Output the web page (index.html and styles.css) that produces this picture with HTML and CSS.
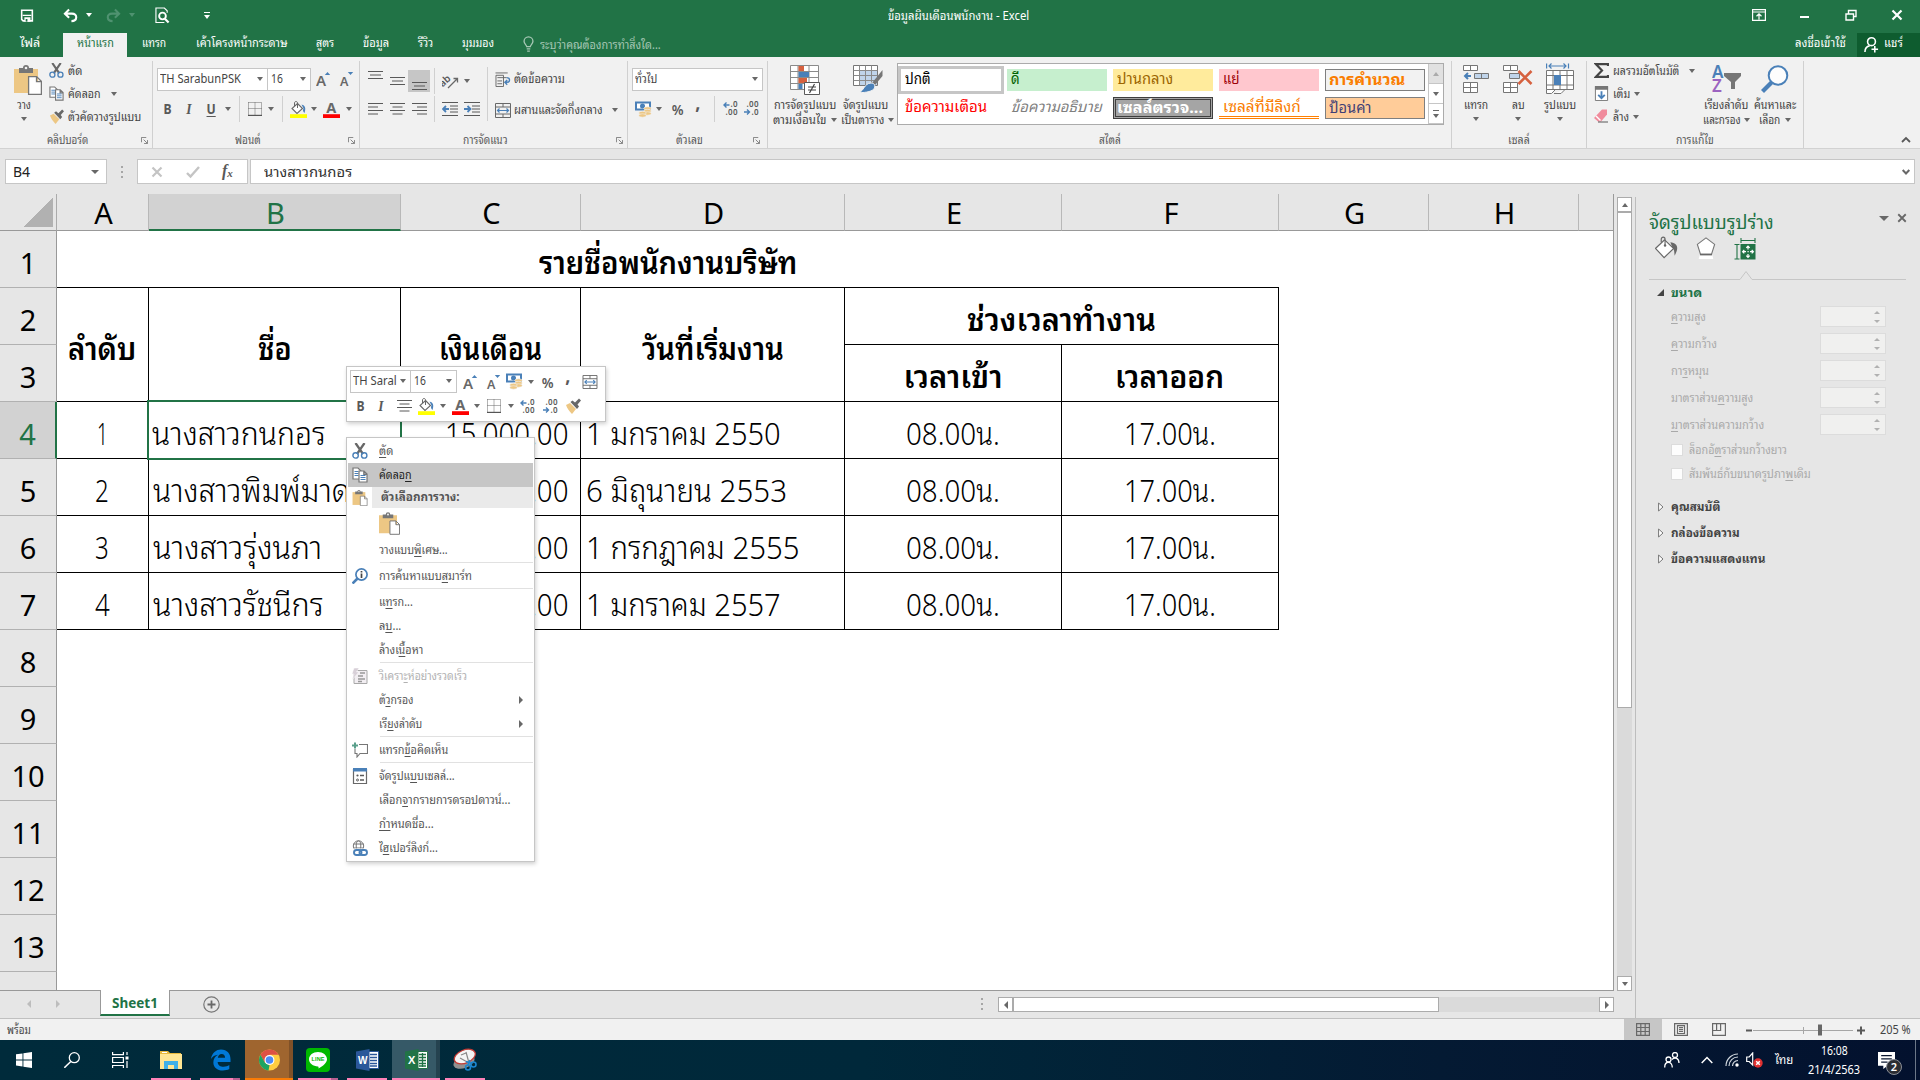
FILE: index.html
```html
<!DOCTYPE html>
<html lang="th">
<head>
<meta charset="utf-8">
<title>ข้อมูลเงินเดือนพนักงาน - Excel</title>
<link rel="stylesheet" href="styles.css">
</head>
<body>
<svg class="sprite" aria-hidden="true">
  <symbol id="save" viewBox="0 0 16 16"><path fill="none" stroke="#fff" stroke-width="1.8" d="M1.9 1.9h12.2v12.2H3.6L1.9 12.400z"/><path fill="#fff" d="M3 7h10v1.500H3zM5 10h7v5H5z"/><path fill="#217346" d="M6.500 12h2v3h-2z"/></symbol>
  <symbol id="undo" viewBox="0 0 16 16"><path fill="none" stroke="currentColor" stroke-width="2.200" d="M6.500 1.500 2 6l4.500 4.500M2.500 6h7c6.500 0 6 8-.5 8"/></symbol>
  <symbol id="preview" viewBox="0 0 16 18"><path fill="none" stroke="#fff" stroke-width="1.200" d="M13 6V4l-3-3H1v15.500h9"/><circle cx="8" cy="9.500" r="3.600" fill="none" stroke="#fff" stroke-width="2"/><path stroke="#fff" stroke-width="2.400" d="m10.500 12.500 4 4"/></symbol>
  <symbol id="bulb" viewBox="0 0 12 18"><path fill="none" stroke="#a6c7b4" stroke-width="1.500" d="M4 12c0-2-3-3-3-6a5 5 0 0 1 10 0c0 3-3 4-3 6zM4 14.500h4M4.500 17h3"/></symbol>
  <symbol id="person" viewBox="0 0 16 18"><circle cx="8" cy="6" r="4.200" fill="none" stroke="#fff" stroke-width="1.700"/><path fill="none" stroke="#fff" stroke-width="1.700" d="M1 17c0-4 2-6 5-6.500M8 14h7M11.500 10.500v7"/></symbol>
  <symbol id="ribbonopt" viewBox="0 0 14 12"><path fill="none" stroke="#fff" stroke-width="1.200" d="M.6.600h12.800v10.800H.6zM.6 3h12.800M7 10.500V5M4.500 7.200 7 4.800l2.500 2.400"/></symbol>
  <symbol id="restore" viewBox="0 0 12 12"><path fill="none" stroke="#fff" stroke-width="1.400" d="M1 5h7.500v6H1zM3.500 5V1.500H11v6H9"/></symbol>
  <symbol id="close" viewBox="0 0 12 12"><path fill="none" stroke="currentColor" stroke-width="2.200" d="m1.500 1.500 9 9m0-9-9 9"/></symbol>

  <symbol id="paste" viewBox="0 0 28 30"><path fill="#edc784" d="M0 4h24v24H0z"/><path fill="#767676" d="M5 3h4a3 3 0 0 1 6 0h4v5H5z"/><circle cx="12" cy="3" r="1.300" fill="#f1f1f1"/><path fill="#fff" stroke="#767676" stroke-width="1.300" d="M14.600 11.600h8l4.800 4.800v13H14.600zM22.500 11.600v5h5"/></symbol>
  <symbol id="cut" viewBox="0 0 16 16"><path stroke="#686868" stroke-width="2.300" d="m3.500 0 7.500 11M12.500 0 5 11"/><circle cx="3.600" cy="12.400" r="2.700" fill="none" stroke="#4a80b8" stroke-width="1.400"/><circle cx="12.200" cy="12.400" r="2.700" fill="none" stroke="#4a80b8" stroke-width="1.400"/></symbol>
  <symbol id="copy" viewBox="0 0 16 16"><path fill="#fff" stroke="#767676" stroke-width="1.200" d="M1 1h5l3 3v8H1z"/><path stroke="#4a80b8" d="M2.500 4.500h4M2.500 6.500h4M2.500 8.500h4"/><path fill="#fff" stroke="#767676" stroke-width="1.200" d="M7 4h5l3 3v8H7zM11.800 4v3.300H15"/><path stroke="#4a80b8" d="M8.500 8.500h5M8.500 10.500h5M8.500 12.500h5"/></symbol>
  <symbol id="brush" viewBox="0 0 16 16"><path fill="#edc784" d="m1 7 4-2 6 6-4 5C4 13 2 10 1 7z"/><path fill="#686868" d="m5.500 4 2-1.500 2.500 2L14 .5l2 2-3.500 4 1.500 2L12 11z"/></symbol>
  <symbol id="launch" viewBox="0 0 8 8"><path fill="none" stroke="#767676" d="M.5 6V.5H6M3 3l4 4M7.500 3.500v4h-4"/></symbol>
  <symbol id="grow" viewBox="0 0 15 16"><text x="0" y="15" font-family="Noto Sans" font-size="15" font-weight="600" fill="#686868" textLength="10">A</text><path fill="#4a80b8" d="m11.500 1 2.700 3H8.800z"/></symbol>
  <symbol id="shrink" viewBox="0 0 15 16"><text x="1" y="15" font-family="Noto Sans" font-size="12.500" font-weight="600" fill="#686868" textLength="8">A</text><path fill="#4a80b8" d="m11.500 4 2.700-3H8.800z"/></symbol>
  <symbol id="borders" viewBox="0 0 14 14"><path fill="none" stroke="#686868" stroke-dasharray="1 1" d="M.5.500h13v12.500M.5.500V13M7 .5V13M.5 6.500h13"/><path stroke="#555" stroke-width="1.200" d="M0 13.400h14"/></symbol>
  <symbol id="fill" viewBox="0 0 17 17"><path fill="#fff" stroke="#686868" stroke-width="1.100" d="m7.500 2.500 5 5-5.500 5-5-5z"/><path fill="none" stroke="#686868" d="M7.500 7V2c0-2-3-2-3 0v3"/><path fill="#4a80b8" d="M11.500 3.500c4 1 4.500 4 3 8.500-1.500-1.500-2-3-1-4.500z"/><path fill="#ff0" d="M0 13.200h17V17H0z"/></symbol>
  <symbol id="fontcolor" viewBox="0 0 17 17"><text x="3.300" y="12" font-family="Noto Sans" font-size="14.500" font-weight="700" fill="#686868" textLength="10.500">A</text><path fill="red" d="M0 13.200h17V17H0z"/></symbol>
  <symbol id="al-left" viewBox="0 0 15 12"><path stroke="#595959" d="M0 .5h15M0 4h10M0 7.500h15M0 11h10"/></symbol>
  <symbol id="al-center" viewBox="0 0 15 12"><path stroke="#595959" d="M0 .5h15M2.500 4h10M0 7.500h15M2.500 11h10"/></symbol>
  <symbol id="al-right" viewBox="0 0 15 12"><path stroke="#595959" d="M0 .5h15M5 4h10M0 7.500h15M5 11h10"/></symbol>
  <symbol id="v-lines" viewBox="0 0 15 8"><path stroke="#595959" d="M0 .5h15M2 4h11M0 7.500h15"/></symbol>
  <symbol id="orient" viewBox="0 0 17 15"><text x="-2" y="9" transform="rotate(-42 5 8)" font-family="Noto Sans" font-size="10" font-weight="600" fill="#595959">ab</text><path fill="none" stroke="#686868" stroke-width="1.300" d="m6 14 9-9M11.500 4.500h4v4"/></symbol>
  <symbol id="ind-out" viewBox="0 0 16 14"><path stroke="#595959" d="M0 .5h16M8 4h8M8 7h8M8 10h8M0 13.500h16"/><path fill="none" stroke="#4a80b8" stroke-width="1.800" d="M7 7H1.500M4 4 1 7l3 3"/></symbol>
  <symbol id="ind-in" viewBox="0 0 16 14"><path stroke="#595959" d="M0 .5h16M8 4h8M8 7h8M8 10h8M0 13.500h16"/><path fill="none" stroke="#4a80b8" stroke-width="1.800" d="M0 7h6M3.500 4l3 3-3 3"/></symbol>
  <symbol id="wrap" viewBox="0 0 16 16"><path fill="none" stroke="#686868" d="M.5 3.500h8v12h-8zM0 1h13M2 6h10M2 9.500h5M2 12.500h5"/><path fill="none" stroke="#4a80b8" stroke-width="1.500" d="M12 6c4 0 4 5 0 5h-2m2.500-2.500L10 11l2.500 2.500"/></symbol>
  <symbol id="merge" viewBox="0 0 16 15"><path fill="none" stroke="#686868" d="M.5.500h15v14H.5zM.5 4h15M.5 11h15M8 .5V4M8 11v3.500"/><path fill="none" stroke="#4a80b8" stroke-width="1.200" d="M2.500 7.500h11M4.500 5.500l-2 2 2 2M11.500 5.500l2 2-2 2"/></symbol>
  <symbol id="money" viewBox="0 0 17 16"><path fill="#4a80b8" d="M0 0h16v9H0z"/><path fill="#fff" d="M2 2h12v5H2z"/><circle cx="7.500" cy="4.500" r="2.500" fill="#4a80b8"/><g fill="#edc784" stroke="#f1f1f1" stroke-width=".6"><ellipse cx="12.500" cy="7" rx="3.700" ry="1.700"/><ellipse cx="12.500" cy="9.500" rx="3.700" ry="1.700"/><ellipse cx="12.500" cy="12" rx="3.700" ry="1.700"/><ellipse cx="7.500" cy="11.500" rx="3.700" ry="1.700"/><ellipse cx="7.500" cy="14" rx="3.700" ry="1.700"/></g></symbol>
  <symbol id="dec-inc" viewBox="0 0 15 14"><g font-family="Noto Sans" font-size="8" font-weight="600" fill="#595959"><text x="7.500" y="6.200" textLength="7">.0</text><text x="2.500" y="13.800" textLength="12">.00</text></g><path fill="none" stroke="#4a80b8" stroke-width="1.400" d="M6.500 4H1m2.500-2.500L1 4l2.500 2.500"/></symbol>
  <symbol id="dec-dec" viewBox="0 0 15 14"><g font-family="Noto Sans" font-size="8" font-weight="600" fill="#595959"><text x="2.500" y="6.200" textLength="12">.00</text><text x="7.500" y="13.800" textLength="7">.0</text></g><path fill="none" stroke="#4a80b8" stroke-width="1.400" d="M0 11h5.500M3 8.500 5.500 11 3 13.500"/></symbol>
  <symbol id="condfmt" viewBox="0 0 30 30"><path fill="#fff" stroke="#8a8a8a" d="M.5.500h28v24H.5zM8 .5v24M19 .5v24M.5 6.500h28M.5 12.500h28M.5 18.500h28"/><path fill="#d6613f" d="M8.500 1H14v5H8.500zM8.500 13H17v5H8.500z"/><path fill="#4a80b8" d="M8.500 7H19v5H8.500zM8.500 19h4v5h-4z"/><path fill="#fff" stroke="#595959" d="M14.500 17.500h15v12h-15z"/><path stroke="#444" stroke-width="1.200" d="M18 22h8M18 25h8M24.500 19l-5 9"/></symbol>
  <symbol id="fmttable" viewBox="0 0 30 28"><path fill="#fff" stroke="#767676" d="M.5.500h24v20H.5z"/><path fill="#c0d4ea" d="M6 5h18v15H6z"/><path stroke="#8a8a8a" d="M6.500.500v20M12.500.500v20M18.500.500v20M.5 5.500h24M.5 10.500h24M.5 15.500h24"/><path fill="#767676" d="M29.500 5v6L22 20l-3-2z"/><path fill="#4a80b8" stroke="#f1f1f1" d="M18 18c3 0 4.500 2 3.500 5S13 28 6 27.500C11 26 11 18.500 18 18z"/></symbol>
  <symbol id="insert" viewBox="0 0 26 28"><path fill="#fff" stroke="#767676" d="M.5.500h14v5H.5zM7.500.500v5M.5 17.500h14v10H.5zM7.500 17.500v10M.5 22.500h14"/><path fill="#c0d4ea" stroke="#767676" d="M11.500 8.500h14v5h-14zM18.500 8.500v5"/><path fill="none" stroke="#4a80b8" stroke-width="2" d="M8 11H2m3-3-3 3 3 3"/></symbol>
  <symbol id="delete" viewBox="0 0 30 28"><path fill="#fff" stroke="#767676" d="M.5.500h14v5H.5zM7.500.500v5M.5 17.500h14v10H.5zM7.500 17.500v10M.5 22.500h14"/><path fill="#c0d4ea" stroke="#767676" d="M6.500 8.500h10v5h-10z"/><path stroke="#d6613f" stroke-width="2.600" d="m15.500 6 13 13m0-13-13 13"/></symbol>
  <symbol id="format" viewBox="0 0 28 32"><path fill="#fff" stroke="#767676" d="M.5 7.500h27v19H.5zM7 7.500v19M14 7.500v19M21 7.500v19M.5 12.500h27M.5 22h27M.5 26.500v4h5l4-4M8 30.500h7l4-4"/><path fill="#4a80b8" d="M8 12h7v10H8z"/><path fill="none" stroke="#4a80b8" stroke-width="1.200" d="M.6.500v5M22.500.500v5M3 3h17M5.500.500 3 3l2.500 2.500M17.500.500 20 3l-2.500 2.500"/></symbol>
  <symbol id="sigma" viewBox="0 0 15 15"><path fill="none" stroke="#444" stroke-width="2.200" d="M14 3V1.200H2L8 7.500 2 13.800h12V12"/></symbol>
  <symbol id="filldown" viewBox="0 0 14 16"><path fill="#fff" stroke="#767676" d="M.5.500h13v15H.5z"/><path fill="#767676" d="M0 0h14v4H0z"/><path fill="none" stroke="#4a80b8" stroke-width="2" d="M7 5.500V13M3.500 9.500 7 13l3.500-3.500"/></symbol>
  <symbol id="eraser" viewBox="0 0 15 14"><path fill="#f08b9c" d="M8 0h5v5l-6 7H4L0 8.500z"/><path fill="#fff" d="m2.500 6 4.500 4.500-1 1L1.500 7z"/><path stroke="#595959" d="M4 12.500h10"/></symbol>
  <symbol id="sort" viewBox="0 0 30 28"><g font-family="Noto Sans" font-size="17" font-weight="600"><text x="0" y="12.500" fill="#4a80b8" textLength="11">A</text><text x="0" y="27" fill="#9b63c0" textLength="10">Z</text></g><path fill="#767676" d="M12 8h17v3l-6 6v7h-4v-7l-7-6z"/></symbol>
  <symbol id="find" viewBox="0 0 28 28"><circle cx="17" cy="10.500" r="9.300" fill="#fdfdfd" stroke="#4a80b8" stroke-width="2"/><path stroke="#4a80b8" stroke-width="4.200" d="m10.500 17.500-9 9"/></symbol>

  <symbol id="smart" viewBox="0 0 16 16"><circle cx="9.500" cy="6.500" r="5.600" fill="none" stroke="#4a80b8" stroke-width="1.700"/><path stroke="#4a80b8" stroke-width="2.600" d="m5.500 10.500-5 5"/><path stroke="#444" stroke-width="1.700" d="M9.500 5.500V10M9.500 3v1.500"/></symbol>
  <symbol id="quick" viewBox="0 0 16 16"><path fill="#f2eef2" stroke="#a8a8a8" d="M2 2.500h13v13H2z"/><path stroke="#999" stroke-width="1.700" d="M8 5h5M6 8h5M6 11h7M6 13.500h4"/><path fill="#d8d0d8" stroke="#fff" stroke-width=".5" d="M2 0h5L4.500 4H7L0 12l2-6H0z"/></symbol>
  <symbol id="comment" viewBox="0 0 16 16"><path fill="#fff" stroke="#767676" stroke-width="1.100" d="M7 2.500h8.500v9H8L5 15v-3.500H3V7"/><path stroke="#5a9f8b" stroke-width="2" d="M0 3.500h6M3 .5v6"/></symbol>
  <symbol id="fmtcells" viewBox="0 0 16 16"><path fill="#fff" stroke="#686868" stroke-width="1.200" d="M1.500 1.500h13v14h-13z"/><path fill="#4a80b8" d="M1 0h14v3.500H1z"/><path stroke="#595959" stroke-width="1.300" d="M8 7.500h4M8 12h4"/><circle cx="5.500" cy="7.500" r="1.100" fill="#595959"/><circle cx="5.500" cy="12" r="1" fill="none" stroke="#595959"/></symbol>
  <symbol id="link" viewBox="0 0 16 16"><g fill="none" stroke="#767676"><circle cx="6.500" cy="6" r="5.200"/><ellipse cx="6.500" cy="6" rx="2.300" ry="5.200"/><path d="M1.500 4h10M1.500 8h10"/></g><path fill="#fff" d="M1 8.500h15V16H1z"/><rect x="2" y="10" width="7.500" height="5" rx="2.500" fill="none" stroke="#4a80b8" stroke-width="1.900"/><rect x="7.500" y="10" width="7.500" height="5" rx="2.500" fill="none" stroke="#4a80b8" stroke-width="1.900"/></symbol>

  <symbol id="pane-fill" viewBox="0 0 24 23"><path fill="#686868" d="M16 6c8 1 9 6 4.500 14-.5-4 0-6-2.500-9z"/><path fill="#fff" stroke="#686868" stroke-width="1.200" d="m10 3.500 9.500 9-10 9.500-9-9.500z"/><path fill="none" stroke="#686868" stroke-width="1.200" d="M6.500 6V3c0-3 4-3 4 0v6"/><circle cx="10.500" cy="9.500" r="1.300" fill="#686868"/></symbol>
  <symbol id="pane-fx" viewBox="0 0 22 24"><path fill="#fff" stroke="#767676" stroke-width="1.200" d="M11 .8 20.500 8l-3.500 11H5L1.500 8z"/><path fill="#fff" d="M4 20h14l1 4H3z"/><path stroke="#686868" stroke-width="1.800" d="M4.500 19.200h13"/></symbol>
  <symbol id="pane-size" viewBox="0 0 21 22"><path fill="#217346" d="M6 6h15v15.500H6z"/><path fill="none" stroke="#217346" stroke-width="1.100" d="M6.500 0v5M20.500 0v5M6.500 2.500h14M0 6.500h5M0 21h5M2.500 6.500V21"/><path fill="none" stroke="#fff" stroke-width="1.200" d="M8.500 13.700h3M15.500 13.700h3M13.500 8.500v3M13.500 16v3M9.800 12l-1.700 1.700 1.700 1.700M17.200 12l1.700 1.700-1.700 1.700M11.800 9.800 13.500 8l1.700 1.800M11.800 17.700l1.700 1.800 1.700-1.800"/><path fill="#fff" d="M13 13h1.200v1.200H13z"/></symbol>

  <symbol id="win" viewBox="0 0 16 16"><path fill="#fff" d="M0 2.300 6.500 1.400v6H0zM7.400 1.300 16 0v7.400H7.400zM0 8.400h6.500v6L0 13.500zM7.400 8.400H16v7.500l-8.600-1.200z"/></symbol>
  <symbol id="search" viewBox="0 0 16 16"><circle cx="10.300" cy="5.700" r="5" fill="none" stroke="#fff" stroke-width="1.300"/><path stroke="#fff" stroke-width="1.500" d="m6.800 9.500-6.500 6.300"/></symbol>
  <symbol id="taskview" viewBox="0 0 17 16"><path fill="none" stroke="#fff" stroke-width="1.200" d="M.6 0v2.600h10.800V0M.6 5.500h10.800v5H.6zM.6 16v-2.500h10.800V16M15 0v3M15 9v7"/><path fill="#fff" d="M13.500 4.500h3v3h-3z"/></symbol>
  <symbol id="explorer" viewBox="0 0 22 18"><path fill="#e8b93d" d="M0 0h8l2 2h11v4H0z"/><path fill="#ffe694" d="M0 3h22v15H0z"/><path fill="#fff" d="M2 1h5v1H2z"/><path fill="#3fb0e8" d="M4 18v-8h14v8h-4v-4H8v4z"/></symbol>
  <symbol id="edge" viewBox="0 0 22 22"><path fill="#0078d7" d="M1 10C2 3.500 6.500 0 11.500 0 18 0 21.500 4.500 21.500 10v3H8c.3 3.500 3 5 6.200 5 2.400 0 4.500-.7 6-1.700v4.200C18.500 21.500 16 22 13.500 22 7.500 22 3.500 18.500 3.500 13.500c0-3.500 2-6.500 5-8C5 5.800 2.500 7.500 1 10zm7.200-1.300h7.600c0-2.500-1.300-4-3.600-4-2.200 0-3.600 1.700-4 4z"/></symbol>
  <symbol id="chrome" viewBox="0 0 22 22"><circle cx="11" cy="11" r="11" fill="#ffcd40"/><path fill="#dd5144" d="M11 0a11 11 0 0 1 9.500 5.500H11L6 14 1.500 5.500A11 11 0 0 1 11 0z"/><path fill="#1da462" d="M1.500 5.500 6.200 13.800 11 16.500l-1 5.500A11 11 0 0 1 1.500 5.500z"/><circle cx="11" cy="11" r="5.200" fill="#fff"/><circle cx="11" cy="11" r="4" fill="#4c8bf5"/></symbol>
  <symbol id="line" viewBox="0 0 24 24"><rect width="24" height="24" rx="4" fill="#00b900"/><path fill="#fff" d="M12 4c5 0 9 3.200 9 7.200 0 3.500-4 6.800-8.500 9.300.2-1.200.2-2-.5-2.100-5-.2-9-3.200-9-7.200S7 4 12 4z"/><text x="5.500" y="13.300" font-family="Liberation Sans" font-size="5.500" font-weight="700" fill="#00b900" textLength="13">LINE</text></symbol>
  <symbol id="word" viewBox="0 0 23 22"><path fill="#fff" stroke="#2b579a" d="M12 2.500h10.500v17H12z"/><path stroke="#2b579a" stroke-width="1.300" d="M14 5.500h7M14 8.500h7M14 11.500h7M14 14.500h7M14 17h7"/><path fill="#2b579a" d="m0 2.500 13.500-2.500v22L0 19.500z"/><text x="2" y="15" font-family="Liberation Sans" font-size="11" font-weight="700" fill="#fff" textLength="9.500" lengthAdjust="spacingAndGlyphs">W</text></symbol>
  <symbol id="excel" viewBox="0 0 23 22"><path fill="#fff" stroke="#217346" d="M12 2.500h10.500v17H12z"/><path stroke="#217346" stroke-width="1.300" d="M14 5.500h7M14 8.500h7M14 11.500h7M14 14.500h7M14 17h7M17.500 4v14"/><path fill="#217346" d="m0 2.500 13.500-2.500v22L0 19.500z"/><text x="3" y="15" font-family="Liberation Sans" font-size="11" font-weight="700" fill="#fff">X</text></symbol>
  <symbol id="snip" viewBox="0 0 24 22"><ellipse cx="11" cy="13" rx="11" ry="6" fill="#909090" transform="rotate(-20 11 13)"/><ellipse cx="12" cy="7.500" rx="11" ry="6.500" fill="#f4f4f4" stroke="#c33b35" stroke-width="1.300" transform="rotate(-22 12 8)"/><path stroke="#888" stroke-width="1.200" d="m7 9 9 5M13 3l3 11M8 6l5-2"/><circle cx="15" cy="18.500" r="2.500" fill="none" stroke="#1b86d0" stroke-width="1.600"/><circle cx="20.500" cy="15.500" r="2.500" fill="none" stroke="#1b86d0" stroke-width="1.600"/><path stroke="#1b86d0" stroke-width="1.500" d="M13 12.500l6 2M17 11l-2 5"/></symbol>
  <symbol id="people" viewBox="0 0 16 16"><g fill="none" stroke="#fff" stroke-width="1.300"><circle cx="11" cy="3" r="2.500"/><circle cx="4.500" cy="7.500" r="2.500"/><path d="M.7 15.500c0-7 7.600-7 7.600 0M8 7.500c3-3 7-1 7 3.500"/></g></symbol>
  <symbol id="wifi" viewBox="0 0 14 14"><g fill="none" stroke="#cfd6dd" stroke-width="1.200"><path d="M1 13A12 12 0 0 1 13 1M4 13A9 9 0 0 1 13 4M7.500 13A6 6 0 0 1 13 7.500"/></g><circle cx="12" cy="12" r="1.700" fill="#fff"/></symbol>
  <symbol id="mute" viewBox="0 0 17 16"><path fill="none" stroke="#fff" stroke-width="1.200" d="M.7 5h2.500l3.500-4v12L3.200 9.500H.7z"/><circle cx="12" cy="11" r="4.700" fill="#e03030"/><path stroke="#fff" stroke-width="1.500" d="m10.200 9.200 3.600 3.600m0-3.600-3.600 3.600"/></symbol>
  <symbol id="note" viewBox="0 0 16 16"><path fill="#fff" d="M0 0h16v13H9l-4 3v-3H0z"/><path stroke="#0a1730" stroke-width="1.200" d="M3 3.500h10M3 6.500h10M3 9.500h6"/></symbol>
</svg>

<div class="app">
  <header class="titlebar">
    <div class="qat">
      <svg class="q-save"><use href="#save"/></svg>
      <svg class="q-undo"><use href="#undo"/></svg><i class="dn white"></i>
      <svg class="q-redo"><use href="#undo"/></svg><i class="dn dim"></i>
      <svg class="q-prev"><use href="#preview"/></svg>
      <span class="q-more"><b></b><i class="dn white"></i></span>
    </div>
    <div class="doc-title"><span class="t" data-w="141">ข้อมูลผินเดือนพนักงาน - Excel</span></div>
    <div class="winctl"><svg class="w14"><use href="#ribbonopt"/></svg><b class="min"></b><svg class="w12"><use href="#restore"/></svg><svg class="w12"><use href="#close"/></svg></div>
  </header>

  <nav class="tabs">
    <span><span class="t" data-w="20">ไฟล์</span></span>
    <span class="active"><span class="t" data-w="37">หน้าแรก</span></span>
    <span><span class="t" data-w="24">แทรก</span></span>
    <span><span class="t" data-w="91">เค้าโครงหน้ากระดาษ</span></span>
    <span><span class="t" data-w="18">สูตร</span></span>
    <span><span class="t" data-w="26">ข้อมูล</span></span>
    <span><span class="t" data-w="15">รีวิว</span></span>
    <span><span class="t" data-w="32">มุมมอง</span></span>
    <span class="tell"><svg><use href="#bulb"/></svg><span class="t" data-w="121">ระบุว่าคุณต้องการทำสิ่งใด...</span></span>
    <span class="signin"><span class="t" data-w="51">ลงชื่อเข้าใช้</span></span>
    <span class="share"><svg><use href="#person"/></svg><span class="t" data-w="19">แชร์</span></span>
  </nav>

  <section class="ribbon">
    <div class="group g-clip">
      <div class="body">
        <div class="big paste"><svg><use href="#paste"/></svg><span class="t" data-w="14">วาง</span><i class="dn"></i></div>
        <div class="stack">
          <div><svg><use href="#cut"/></svg><span class="t" data-w="14">ตัด</span></div>
          <div><svg><use href="#copy"/></svg><span class="t" data-w="33">คัดลอก</span><i class="dn far"></i></div>
          <div><svg><use href="#brush"/></svg><span class="t" data-w="73">ตัวคัดวางรูปแบบ</span></div>
        </div>
      </div>
      <footer><span class="t" data-w="41">คลิปบอร์ด</span><svg><use href="#launch"/></svg></footer>
    </div>

    <div class="group g-font">
      <div class="row r1">
        <div class="combo"><span class="t" data-w="81">TH SarabunPSK</span><i class="dn"></i></div>
        <div class="combo"><span class="t" data-w="12">16</span><i class="dn"></i></div>
        <svg class="w15"><use href="#grow"/></svg><svg class="w15"><use href="#shrink"/></svg>
      </div>
      <div class="row r2">
        <b class="glyph">B</b><b class="glyph it">I</b><b class="glyph un">U</b><i class="dn"></i><s></s>
        <svg class="w14"><use href="#borders"/></svg><i class="dn"></i><s></s>
        <svg class="w17"><use href="#fill"/></svg><i class="dn"></i>
        <svg class="w17"><use href="#fontcolor"/></svg><i class="dn"></i>
      </div>
      <footer><span class="t" data-w="26">ฟอนต์</span><svg><use href="#launch"/></svg></footer>
    </div>

    <div class="group g-align">
      <div class="halves">
        <div class="left">
          <div class="row r1"><svg class="vl top"><use href="#v-lines"/></svg><svg class="vl"><use href="#v-lines"/></svg><span class="on"><svg class="vl"><use href="#v-lines"/></svg></span><s></s><svg class="w17"><use href="#orient"/></svg><i class="dn"></i></div>
          <div class="row r2"><svg class="al"><use href="#al-left"/></svg><svg class="al"><use href="#al-center"/></svg><svg class="al"><use href="#al-right"/></svg><s></s><svg class="ind"><use href="#ind-out"/></svg><svg class="ind"><use href="#ind-in"/></svg></div>
        </div>
        <s class="tall"></s>
        <div class="right">
          <div><svg><use href="#wrap"/></svg><span class="t" data-w="51">ตัดข้อความ</span></div>
          <div><svg><use href="#merge"/></svg><span class="t" data-w="89">ผสานและจัดกึ่งกลาง</span><i class="dn far"></i></div>
        </div>
      </div>
      <footer><span class="t" data-w="45">การจัดแนว</span><svg><use href="#launch"/></svg></footer>
    </div>

    <div class="group g-num">
      <div class="row r1"><div class="combo"><span class="t" data-w="22">ทั่วไป</span><i class="dn"></i></div></div>
      <div class="row r2"><svg class="w17"><use href="#money"/></svg><i class="dn"></i><b class="glyph pct">%</b><b class="glyph comma">,</b><s></s><svg class="w15"><use href="#dec-inc"/></svg><svg class="w15"><use href="#dec-dec"/></svg></div>
      <footer><span class="t" data-w="27">ตัวเลข</span><svg><use href="#launch"/></svg></footer>
    </div>

    <div class="group g-styles">
      <div class="body">
        <div class="big cond"><svg><use href="#condfmt"/></svg><span class="t" data-w="62">การจัดรูปแบบ</span><span class="ln"><span class="t" data-w="53">ตามเงื่อนไข</span><i class="dn"></i></span></div>
        <div class="big tbl"><svg><use href="#fmttable"/></svg><span class="t" data-w="45">จัดรูปแบบ</span><span class="ln"><span class="t" data-w="43">เป็นตาราง</span><i class="dn"></i></span></div>
        <div class="gallery">
          <div class="cells">
            <span class="c-normal"><span class="t" data-w="26">ปกติ</span></span>
            <span class="c-good"><span class="t" data-w="9">ดี</span></span>
            <span class="c-neutral"><span class="t" data-w="56">ปานกลาง</span></span>
            <span class="c-bad"><span class="t" data-w="17">แย่</span></span>
            <span class="c-calc"><span class="t" data-w="76">การคำนวณ</span></span>
            <span class="c-warn"><span class="t" data-w="82">ข้อความเตือน</span></span>
            <span class="c-expl"><span class="t" data-w="91">ข้อความอธิบาย</span></span>
            <span class="c-check"><span class="t" data-w="86">เซลล์ตรวจ...</span></span>
            <span class="c-linked"><span class="t" data-w="78">เซลล์ที่มีลิงก์</span></span>
            <span class="c-input"><span class="t" data-w="43">ป้อนค่า</span></span>
          </div>
          <div class="spin"><span class="off"><i class="up"></i></span><span><i class="dn"></i></span><span class="more"><b></b><i class="dn"></i></span></div>
        </div>
      </div>
      <footer><span class="t" data-w="22">สไตล์</span></footer>
    </div>

    <div class="group g-cells">
      <div class="body">
        <div class="big"><svg class="i-ins"><use href="#insert"/></svg><span class="t" data-w="24">แทรก</span><i class="dn"></i></div>
        <div class="big"><svg class="i-del"><use href="#delete"/></svg><span class="t" data-w="13">ลบ</span><i class="dn"></i></div>
        <div class="big"><svg class="i-fmt"><use href="#format"/></svg><span class="t" data-w="32">รูปแบบ</span><i class="dn"></i></div>
      </div>
      <footer><span class="t" data-w="22">เซลล์</span></footer>
    </div>

    <div class="group g-edit">
      <div class="body">
        <div class="stack">
          <div><svg><use href="#sigma"/></svg><span class="t" data-w="66">ผลรวมอัตโนมัติ</span><i class="dn far"></i></div>
          <div><svg><use href="#filldown"/></svg><span class="t" data-w="17">เติม</span><i class="dn"></i></div>
          <div><svg><use href="#eraser"/></svg><span class="t" data-w="16">ล้าง</span><i class="dn"></i></div>
        </div>
        <div class="big sortb"><svg><use href="#sort"/></svg><span class="t" data-w="44">เรียงลำดับ</span><span class="ln"><span class="t" data-w="38">และกรอง</span><i class="dn"></i></span></div>
        <div class="big findb"><svg><use href="#find"/></svg><span class="t" data-w="42">ค้นหาและ</span><span class="ln"><span class="t" data-w="21">เลือก</span><i class="dn"></i></span></div>
      </div>
      <footer><span class="t" data-w="38">การแก้ไข</span></footer>
    </div>
    <svg class="collapse" viewBox="0 0 10 6"><path fill="none" stroke="#595959" stroke-width="1.800" d="m1 5 4-4 4 4"/></svg>
  </section>

  <section class="formula">
    <div class="namebox"><span class="t" data-w="17">B4</span><i class="dn"></i></div>
    <div class="dots"><b></b><b></b><b></b></div>
    <div class="fxbox"><svg class="w12 x"><use href="#close"/></svg><svg class="w14 chk" viewBox="0 0 14 12"><path fill="none" stroke="#c4c4c4" stroke-width="2.400" d="m1 7 3.500 3.500L13 1"/></svg><em>f<sub>x</sub></em></div>
    <div class="input"><span class="t" data-w="88">นางสาวกนกอร</span><svg viewBox="0 0 8 6"><path fill="none" stroke="#686868" stroke-width="2" d="m.7 1 3.300 3.500L7.300 1"/></svg></div>
  </section>

  <main class="work">
    <div class="book">
      <div class="sheetrow">
        <div class="grid">
          <div class="corner"></div>
          <div class="ch">A</div><div class="ch sel">B</div><div class="ch">C</div><div class="ch">D</div><div class="ch">E</div><div class="ch">F</div><div class="ch">G</div><div class="ch">H</div><div class="ch last"></div>
          <div class="rh">1</div><div class="c title"><span class="t" data-w="258">รายชื่อพนักงานบริษัท</span></div>
          <div class="rh row2">2</div>
          <div class="c h two col-a"><span class="t" data-w="68">ลำดับ</span></div>
          <div class="c h two col-b"><span class="t" data-w="34">ชื่อ</span></div>
          <div class="c h two col-c"><span class="t" data-w="103">เงินเดือน</span></div>
          <div class="c h two col-d"><span class="t" data-w="142">วันที่เริ่มงาน</span></div>
          <div class="c h wide row2"><span class="t" data-w="189">ช่วงเวลาทำงาน</span></div>
          <div class="rh row3">3</div><div class="c h row3 col-e"><span class="t" data-w="99">เวลาเข้า</span></div><div class="c h row3 col-f"><span class="t" data-w="109">เวลาออก</span></div>
          <div class="rh sel">4</div><div class="c"><span class="t" data-w="11">1</span></div><div class="c l cur"><span class="t" data-w="174">นางสาวกนกอร</span></div><div class="c r"><span class="t" data-w="123">15,000.00</span></div><div class="c l d"><span class="t" data-w="195">1 มกราคม 2550</span></div><div class="c"><span class="t" data-w="94">08.00น.</span></div><div class="c"><span class="t" data-w="92">17.00น.</span></div>
          <div class="rh">5</div><div class="c"><span class="t" data-w="14">2</span></div><div class="c l"><span class="t" data-w="209">นางสาวพิมพ์มาดา</span></div><div class="c r"><span class="t" data-w="123">15,000.00</span></div><div class="c l d"><span class="t" data-w="201">6 มิถุนายน 2553</span></div><div class="c"><span class="t" data-w="94">08.00น.</span></div><div class="c"><span class="t" data-w="92">17.00น.</span></div>
          <div class="rh">6</div><div class="c"><span class="t" data-w="14">3</span></div><div class="c l"><span class="t" data-w="169">นางสาวรุ่งนภา</span></div><div class="c r"><span class="t" data-w="123">15,000.00</span></div><div class="c l d"><span class="t" data-w="214">1 กรกฎาคม 2555</span></div><div class="c"><span class="t" data-w="94">08.00น.</span></div><div class="c"><span class="t" data-w="92">17.00น.</span></div>
          <div class="rh">7</div><div class="c"><span class="t" data-w="15">4</span></div><div class="c l"><span class="t" data-w="171">นางสาวรัชนีกร</span></div><div class="c r"><span class="t" data-w="123">15,000.00</span></div><div class="c l d"><span class="t" data-w="195">1 มกราคม 2557</span></div><div class="c"><span class="t" data-w="94">08.00น.</span></div><div class="c"><span class="t" data-w="92">17.00น.</span></div>
          <div class="rh">8</div><div class="rh">9</div><div class="rh">10</div><div class="rh">11</div><div class="rh">12</div><div class="rh">13</div><div class="rh stub"></div>
        </div>
        <div class="vscroll"><span class="btn"><i class="up"></i></span><span class="thumb"></span><span class="track"></span><span class="btn"><i class="dn"></i></span></div>
      </div>
      <div class="tabbar">
        <i class="lt nav1"></i><i class="rt nav2"></i>
        <span class="sheet"><span class="t" data-w="46">Sheet1</span></span>
        <svg class="plus" viewBox="0 0 17 17"><circle cx="8.500" cy="8.500" r="7.700" fill="none" stroke="#767676" stroke-width="1.200"/><path stroke="#686868" stroke-width="1.800" d="M4.500 8.500h8M8.500 4.500v8"/></svg>
        <div class="dots"><b></b><b></b><b></b></div>
        <div class="hscroll"><span class="btn"><i class="lt"></i></span><span class="thumb"></span><span class="track"></span><span class="btn"><i class="rt"></i></span></div>
      </div>
    </div>

    <aside class="pane">
      <div class="phead"><span class="t" data-w="125">จัดรูปแบบรูปร่าง</span><i class="dn"></i><svg class="w12"><use href="#close"/></svg></div>
      <div class="picons"><svg><use href="#pane-fill"/></svg><svg><use href="#pane-fx"/></svg><svg><use href="#pane-size"/></svg></div>
      <svg class="rule" viewBox="0 0 257 10"><path fill="none" stroke="#c6c6c6" d="M0 9.500h91l6-8 6 8h154"/></svg>
      <h4 class="open"><svg viewBox="0 0 6 6"><path fill="#444" d="M6 0v6H0z"/></svg><span class="t" data-w="31">ขนาด</span></h4>
      <div class="field"><span class="t" data-w="35"><u>ค</u>วามสูง</span><span class="num"><i class="up"></i><i class="dn"></i></span></div>
      <div class="field"><span class="t" data-w="46"><u>ค</u>วามกว้าง</span><span class="num"><i class="up"></i><i class="dn"></i></span></div>
      <div class="field"><span class="t" data-w="38">กา<u>ร</u>หมุน</span><span class="num"><i class="up"></i><i class="dn"></i></span></div>
      <div class="field"><span class="t" data-w="82">มาตราส่วน<u>ค</u>วามสูง</span><span class="num"><i class="up"></i><i class="dn"></i></span></div>
      <div class="field"><span class="t" data-w="93"><u>ม</u>าตราส่วนความกว้าง</span><span class="num"><i class="up"></i><i class="dn"></i></span></div>
      <div class="check"><b></b><span class="t" data-w="98">ล็อกอั<u>ต</u>ราส่วนกว้างยาว</span></div>
      <div class="check"><b></b><span class="t" data-w="122">สัมพันธ์กับขนาดรูปภา<u>พ</u>เดิม</span></div>
      <div class="sections">
        <h4><svg viewBox="0 0 6 10"><path fill="#fff" stroke="#767676" d="m.6 1 4.400 4L.6 9z"/></svg><span class="t" data-w="49">คุณสมบัติ</span></h4>
        <h4><svg viewBox="0 0 6 10"><path fill="#fff" stroke="#767676" d="m.6 1 4.400 4L.6 9z"/></svg><span class="t" data-w="69">กล่องข้อความ</span></h4>
        <h4><svg viewBox="0 0 6 10"><path fill="#fff" stroke="#767676" d="m.6 1 4.400 4L.6 9z"/></svg><span class="t" data-w="94">ข้อความแสดงแทน</span></h4>
      </div>
    </aside>
  </main>

  <div class="status">
    <span class="t" data-w="24">พร้อม</span>
    <span class="view on"><svg viewBox="0 0 14 13"><path fill="none" stroke="#686868" stroke-width="1.200" d="M.6.600h12.800v11.800H.6zM4.800.600v11.800M9.200.600v11.800M.6 4.500h12.800M.6 8.500h12.800"/></svg></span>
    <span class="view"><svg viewBox="0 0 14 13"><path fill="none" stroke="#686868" stroke-width="1.200" d="M.6.600h12.800v11.800H.6zM3.500 2.700h7v7.800h-7zM5 4.700h4M5 6.600h4M5 8.500h4"/></svg></span>
    <span class="view"><svg viewBox="0 0 14 13"><path fill="none" stroke="#686868" stroke-width="1.200" d="M.6.600h12.800v11.800H.6zM.6 7.500h8V.6M4.600.600v7"/></svg></span>
    <svg class="zoombar" viewBox="0 0 120 12"><path stroke="#595959" stroke-width="2" d="M0 6.500h6M111 6.500h8M115 2.500v8"/><path stroke="#a6a6a6" d="M7 6.500h100M57.500 3v7"/><path fill="#686868" d="M72 .5h4v11h-4z"/></svg>
    <span class="t pc" data-w="31">205 %</span>
  </div>

  <div class="taskbar">
    <span class="tb"><svg class="s16"><use href="#win"/></svg></span>
    <span class="tb"><svg class="s16"><use href="#search"/></svg></span>
    <span class="tb wideb"><svg class="s17"><use href="#taskview"/></svg></span>
    <span class="tb app-i run"><svg class="sx"><use href="#explorer"/></svg></span>
    <span class="tb app-i run many"><svg class="s22"><use href="#edge"/></svg></span>
    <span class="tb app-i hot"><svg class="s22"><use href="#chrome"/></svg></span>
    <span class="tb app-i run many"><svg class="s24"><use href="#line"/></svg></span>
    <span class="tb app-i run"><svg class="s23"><use href="#word"/></svg></span>
    <span class="tb app-i front"><svg class="s23"><use href="#excel"/></svg></span>
    <span class="tb app-i run"><svg class="s24"><use href="#snip"/></svg></span>
    <div class="tray">
      <svg class="s16 people"><use href="#people"/></svg>
      <svg class="caret" viewBox="0 0 12 8"><path fill="none" stroke="#fff" stroke-width="1.500" d="m.7 7 5.300-5.500L11.300 7"/></svg>
      <svg class="wifi"><use href="#wifi"/></svg>
      <svg class="mute"><use href="#mute"/></svg>
      <span class="t lang" data-w="18">ไทย</span>
      <div class="clock"><span class="t" data-w="27">16:08</span><span class="t" data-w="52">21/4/2563</span></div>
      <div class="notes"><svg><use href="#note"/></svg><b>2</b></div>
      <s></s>
    </div>
  </div>
</div>

<div class="mini">
  <div class="mrow m1">
    <div class="combo"><span class="t" data-w="44">TH Saral</span><i class="dn"></i></div>
    <div class="combo"><span class="t" data-w="12">16</span><i class="dn"></i></div>
    <svg class="w15"><use href="#grow"/></svg><svg class="w15"><use href="#shrink"/></svg><svg class="w17"><use href="#money"/></svg><i class="dn"></i><b class="glyph pct">%</b><b class="glyph comma">,</b><svg class="ind"><use href="#merge"/></svg>
  </div>
  <div class="mrow m2">
    <b class="glyph">B</b><b class="glyph it">I</b><svg class="al"><use href="#al-center"/></svg><svg class="w17"><use href="#fill"/></svg><i class="dn"></i><svg class="w17"><use href="#fontcolor"/></svg><i class="dn"></i><svg class="w14"><use href="#borders"/></svg><i class="dn"></i><svg class="w15"><use href="#dec-inc"/></svg><svg class="w15"><use href="#dec-dec"/></svg><svg class="s16"><use href="#brush"/></svg>
  </div>
</div>

<div class="menu">
  <div class="mi"><svg><use href="#cut"/></svg><span class="t" data-w="14"><u>ตั</u>ด</span></div>
  <div class="mi hover"><svg><use href="#copy"/></svg><span class="t" data-w="33">คัดลอ<u>ก</u></span></div>
  <div class="mi head"><svg><use href="#paste"/></svg><span class="band"><span class="t" data-w="79">ตัวเลือกการวาง:</span></span></div>
  <div class="mi opt"><span></span><svg><use href="#paste"/></svg></div>
  <div class="mi"><span></span><span class="t" data-w="69">วางแบบ<u>พิ</u>เศษ...</span></div>
  <hr>
  <div class="mi"><svg><use href="#smart"/></svg><span class="t" data-w="93">การค้นหาแบบ<u>ส</u>มาร์ท</span></div>
  <hr>
  <div class="mi"><span></span><span class="t" data-w="34">แ<u>ท</u>รก...</span></div>
  <div class="mi"><span></span><span class="t" data-w="22">ล<u>บ</u>...</span></div>
  <div class="mi"><span></span><span class="t" data-w="44">ล้างเ<u>นื้</u>อหา</span></div>
  <hr>
  <div class="mi off"><svg><use href="#quick"/></svg><span class="t" data-w="88">วิเครา<u>ะ</u>ห์อย่างรวดเร็ว</span></div>
  <div class="mi"><span></span><span class="t" data-w="34">ตั<u>ว</u>กรอง</span><i class="rt"></i></div>
  <div class="mi"><span></span><span class="t" data-w="43">เรี<u>ย</u>งลำดับ</span><i class="rt"></i></div>
  <hr>
  <div class="mi"><svg><use href="#comment"/></svg><span class="t" data-w="69">แทรก<u>ข้</u>อคิดเห็น</span></div>
  <hr>
  <div class="mi"><svg><use href="#fmtcells"/></svg><span class="t" data-w="76">จัดรูปแ<u>บ</u>บเซลล์...</span></div>
  <div class="mi"><span></span><span class="t" data-w="131">เลือก<u>จ</u>ากรายการดรอปดาวน์...</span></div>
  <div class="mi"><span></span><span class="t" data-w="55"><u>กำ</u>หนดชื่อ...</span></div>
  <div class="mi"><svg><use href="#link"/></svg><span class="t" data-w="59">ไ<u>ฮ</u>เปอร์ลิงก์...</span></div>
</div>
<script src="fit.js"></script>
</body>
</html>
```
FILE: styles.css
```css
* { box-sizing: border-box; }
body { margin: 0; width: 1920px; height: 1080px; overflow: hidden; font: 12px/16px "Noto Sans", "Noto Sans Thai Looped", "Noto Looped Thai", Loma, Waree, Garuda, "Noto Sans Thai", "Open Sans", sans-serif; color: #444; background: #e6e6e6; }
.sprite { display: none; }
svg { display: block; flex: none; overflow: visible; }
.t { display: inline-block; white-space: nowrap; transform-origin: 0 50%; flex: none; }
s { display: block; width: 1px; height: 26px; background: #d0d0d0; }
i { display: block; flex: none; width: 0; height: 0; }
.dn { border: 3px solid transparent; border-top: 4px solid #686868; border-bottom: 0; }
.up { border: 3px solid transparent; border-bottom: 4px solid #686868; border-top: 0; }
.lt { border: 4px solid transparent; border-right: 4px solid #686868; border-left: 0; }
.rt { border: 4px solid transparent; border-left: 4px solid #686868; border-right: 0; }
.w12 { width: 12px; height: 12px; } .w14 { width: 14px; height: 14px; } .w15 { width: 15px; height: 16px; } .w17 { width: 17px; height: 17px; }
.s16 { width: 16px; height: 16px; } .s17 { width: 17px; height: 16px; } .s22 { width: 21px; height: 22px; } .s23 { width: 23px; height: 22px; } .s24 { width: 24px; height: 24px; } .sx { width: 22px; height: 18px; }
.app { display: flex; flex-direction: column; height: 1080px; }

/* title bar */
.titlebar { display: flex; height: 33px; background: #217346; color: #fff; }
.qat { display: flex; align-items: center; width: 888px; padding: 0 0 3px 20px; }
.q-save { width: 14px; height: 15px; margin-right: 29px; }
.q-undo, .q-redo { width: 15px; height: 15px; margin-right: 8px; }
.q-redo { color: #4f9270; transform: scaleX(-1); margin-left: 14px; }
.white { border-top-color: #fff; } .dim { border-top-color: #4f9270; }
.q-prev { width: 15px; height: 17px; margin-left: 20px; }
.q-more { margin-left: 34px; }
.q-more b { display: block; width: 6px; height: 1px; background: #fff; margin-bottom: 2px; }
.doc-title { width: 864px; line-height: 32px; }
.winctl { display: flex; align-items: center; padding-bottom: 3px; }
.winctl .w14 { height: 12px; }
.winctl .min { width: 9px; height: 2px; background: #fff; margin: 4px 36px 0 34px; }
.winctl .w12 + .w12 { margin-left: 34px; }

.tabs { display: grid; grid-template-columns: 61px 66px 54px 121px 46px 56px 43px 62px 1275px 73px 63px; height: 24px; background: #217346; color: #fff; justify-items: center; line-height: 20px; }
.tabs .active { background: #f1f1f1; color: #217346; width: 64px; text-align: center; justify-self: end; }
.tabs > span { height: 24px; display: flex; justify-content: center; }
.tabs .tell { justify-self: start; padding-left: 14px; color: #a6c7b4; gap: 6px; line-height: 23px; }
.tell svg { width: 11px; height: 16px; margin-top: 3px; }
.tabs .share { width: 63px; justify-content: flex-start; gap: 5px; padding-left: 7px; background: #0e5c2f; }
.share svg { width: 15px; height: 17px; margin-top: 3px; }

/* ribbon */
.ribbon { display: flex; height: 92px; background: #f1f1f1; border-bottom: 1px solid #d2d2d2; }
.group { display: flex; flex-direction: column; position: relative; height: 87px; margin-top: 4px; border-right: 1px solid #d0d0d0; }
.group footer { display: flex; justify-content: center; margin-top: auto; height: 15px; color: #595959; position: relative; line-height: 14px; }
.group footer svg { position: absolute; right: 4px; top: 4px; width: 7px; height: 7px; }
.g-clip { width: 153px; } .g-font { width: 207px; } .g-align { width: 268px; } .g-num { width: 140px; } .g-styles { width: 684px; } .g-cells { width: 135px; } .g-edit { width: 217px; }
.g-clip footer { padding-right: 17px; } .g-font footer { padding-right: 16px; } .g-num footer { padding-right: 16px; } .g-align footer { padding-right: 17px; }
.g-num footer svg { right: 7px; }
.body { display: flex; }
.big { display: flex; flex-direction: column; align-items: center; padding-top: 4px; }
.big > svg { height: 28px; margin-bottom: 4px; }
.big > .t { line-height: 16px; height: 16px; }
.big > .dn { margin-top: 4px; }
.ln { display: flex; align-items: center; gap: 4px; line-height: 14px; }
.paste { width: 43px; padding-left: 7px; }
.paste > svg { width: 28px; height: 30px; margin: 0 0 2px 6px; }
.paste > .t { align-self: flex-start; margin-left: 10px; }
.paste > .dn { align-self: flex-start; margin-left: 14px; }
.stack { display: grid; grid-template-rows: repeat(3, 23px); padding-left: 6px; margin-top: -2px; }
.stack > div { display: flex; align-items: center; gap: 4px; }
.stack svg { width: 15px; height: 15px; }
.far { margin-left: 6px; }
.row { display: grid; place-items: center; height: 22px; margin-top: 7px; }
.row > .w15 { margin-top: -2px; }
.row.r2 { height: 26px; margin-top: 6px; }
.g-font .r1 { grid-template-columns: 111px 43px 25px 20px; margin-left: 4px; }
.g-font .r2 { grid-template-columns: 22px 22px 22px 12px 10px 21px 12px 10px 22px 10px 25px 10px; margin-left: 3px; }
.combo { display: flex; align-items: center; justify-content: space-between; width: 100%; height: 23px; border: 1px solid #c6c6c6; background: #fff; padding: 0 4px 2px 2px; }
.combo + .combo { width: calc(100% + 1px); margin-left: -1px; padding-left: 3px; }
.glyph { font: 700 13.500px/18px "Noto Sans", sans-serif; color: #595959; transform: scaleX(.9); }
.it { font-family: "Liberation Serif", serif; font-style: italic; font-size: 15px; }
.un { text-decoration: underline; text-underline-offset: 2px; }
.pct { font-size: 15px; font-weight: 600; }
.comma { font-size: 20px; line-height: 12px; margin-top: -14px; }
.halves { display: flex; height: 62px; padding-left: 4px; }
.halves .left { width: 119px; }
.g-align .r1 { grid-template-columns: 22px 22px 22px 8px 24px 10px; justify-content: start; }
.g-align .r2 { grid-template-columns: 22px 22px 22px 8px 24px 20px; justify-content: start; }
.vl { width: 15px; height: 8px; } .al { width: 15px; height: 12px; } .ind { width: 16px; height: 14px; }
.vl.top { align-self: start; margin-top: 3px; }
.on .vl { margin: 12px auto 0; }
.row .on { width: 22px; height: 22px; background: #c6c6c6; }
.tall { margin: 6px 3px 0 4px; height: 54px; }
.halves .right > div { display: flex; align-items: center; gap: 3px; height: 22px; margin: 7px 0 9px 4px; }
.halves .right svg { width: 16px; height: 15px; }
.g-num .r1 { grid-template-columns: 131px; margin-left: 4px; }
.g-num .r2 { grid-template-columns: 22px 10px 27px 14px 18px 14px 29px; margin-left: 4px; }
.cond { width: 70px; margin-left: 2px; } .cond > svg { width: 30px; height: 30px; margin-bottom: 2px; }
.tbl { width: 55px; } .tbl > svg { width: 30px; height: 28px; }
.tbl > .t { margin-right: 4px; }
.gallery { display: flex; width: 547px; height: 62px; border: 1px solid #ababab; background: #fff; margin: 2px 0 0 2px; }
.cells { display: grid; grid-template: 22px 22px / repeat(5, 100px); gap: 6px; padding: 5px 3px; width: 531px; font-size: 15px; line-height: 18px; }
.cells > span { padding-left: 4px; white-space: nowrap; height: 22px; }
.c-normal { color: #000; outline: 3px solid #c6c6c6; }
.c-good { background: #c6efce; color: #006100; }
.c-neutral { background: #ffeb9c; color: #9c6500; }
.c-bad { background: #ffc7ce; color: #9c0006; }
.c-calc { background: #f2f2f2; color: #fa7d00; border: 1px solid #7f7f7f; font-weight: 700; }
.cells .c-calc, .cells .c-input { padding-left: 3px; }
.c-warn { color: red; } .c-expl { color: #7f7f7f; font-style: italic; }
.cells .c-check { background: #a5a5a5; color: #fff; font-weight: 700; border: 3px double #3f3f3f; padding-left: 1px; line-height: 14px; }
.c-linked { color: #fa7d00; border-bottom: 3px double #ff8001; }
.c-input { background: #fc9; color: #3f3f76; border: 1px solid #7f7f7f; }
.spin { width: 15px; display: grid; grid-template-rows: 20px 20px 20px; border-left: 1px solid #c6c6c6; }
.spin span { display: grid; place-content: center; justify-items: center; border-bottom: 1px solid #c6c6c6; }
.spin .off { background: #e1e1e1; } .off .up { border-bottom-color: #ababab; }
.spin .more b { width: 6px; height: 1px; background: #686868; margin-bottom: 3px; }
.g-styles footer { padding-left: 0; }
.g-cells .body { padding-left: 3px; } .g-cells .big { width: 42px; }
.i-ins { width: 26px; } .i-del { width: 30px; } .big > .i-fmt { width: 28px; height: 32px; margin: -2px 0 2px; }
.g-edit .stack { padding-left: 7px; width: 115px; }
.sortb { width: 49px; } .sortb > svg { width: 30px; } .findb { width: 48px; } .findb > svg { width: 28px; }
.g-edit footer { padding-right: 0; }
.collapse { width: 10px; height: 6px; margin: 80px 0 0 97px; }

/* formula bar */
.formula { display: flex; height: 45px; padding: 10px 5px 0; }
.formula > div { height: 25px; background: #fff; border: 1px solid #c6c6c6; display: flex; align-items: center; }
.namebox { width: 102px; justify-content: space-between; padding: 0 7px; font-size: 14px; color: #222; }
.namebox .dn { border-width: 4px 4px 0; }
.formula > .dots, .dots { width: 30px; background: none; border: 0; flex-direction: column; justify-content: center; gap: 3px; display: flex; align-items: center; }
.dots b { width: 2px; height: 2px; background: #a6a6a6; }
.fxbox { width: 111px; padding-left: 13px; }
.fxbox .x { color: #c4c4c4; margin-right: 23px; }
.fxbox em { font: italic 700 16px/16px "Liberation Serif", serif; margin-left: 22px; color: #595959; }
.fxbox sub { font-size: 11px; vertical-align: -1px; }
.input { width: 1665px; margin-left: 2px; padding: 0 4px 0 13px; justify-content: space-between; font-size: 14px; color: #333; }
.input svg { width: 8px; height: 6px; }

/* sheet */
.work { display: flex; height: 824px; }
.book { width: 1635px; }
.sheetrow { display: flex; height: 797px; }
.grid { display: grid; width: 1614px; height: 797px; grid-template-columns: 57px 92px 252px 180px 264px 217px 217px 150px 150px 35px; grid-template-rows: 37px repeat(13, 57px) 18px; background: #fff; border-bottom: 1px solid #999; border-right: 1px solid #999; overflow: hidden; font-size: 31px; line-height: 40px; }
.corner, .ch, .rh { background: #e6e6e6; color: #000; font: 29px/35px "Noto Sans", sans-serif; text-align: center; }
.corner { border-right: 1px solid #ababab; border-bottom: 1px solid #999; background: linear-gradient(to bottom right, transparent 50%, #b1b1b1 50%) 24px 4px / 29px 29px no-repeat #e6e6e6; }
.ch { border-bottom: 1px solid #999; border-right: 1px solid #b8b8b8; padding: 1px 0 0 2px; }
.ch.last { border-right: 0; margin-right: 0; }
.ch.sel { background: #d2d2d2; color: #217346; border-bottom: 2px solid #217346; }
.rh { grid-column: 1; border-right: 1px solid #999; border-bottom: 1px solid #b1b1b1; padding-top: 11px; line-height: 42px; }
.rh.sel { background: #d2d2d2; color: #217346; border-right: 2px solid #217346; }
.rh.stub { padding: 0; border-bottom: 0; }
.c { display: flex; justify-content: center; align-items: center; padding: 6px 1px 0 0; border: solid #000; border-width: 0 1px 1px 0; color: #000; white-space: nowrap; font-weight: 300; min-width: 0; }
.c.l { justify-content: flex-start; padding-left: 4px; } .c.l.d { padding-left: 5px; }
.c.r { justify-content: flex-end; padding-right: 12px; }
.c.h, .c.title { font-weight: 600; padding: 6px 0 0; }
.title { grid-column: 2 / 8; border-right: 0; }
.two { grid-row: 3 / 5; } .wide { grid-column: 6 / 8; }
.row2 { grid-row: 3; } .row3 { grid-row: 4; }
.col-a { grid-column: 2; } .col-b { grid-column: 3; } .col-c { grid-column: 4; } .col-d { grid-column: 5; } .col-e { grid-column: 6; } .col-f { grid-column: 7; }
.cur { outline: 2px solid #217346; outline-offset: -1px; margin: -1px 0 0 -1px; z-index: 1; }
.vscroll { display: flex; flex-direction: column; width: 15px; margin: 3px 0 0 3px; height: 794px; }
.btn { width: 15px; height: 15px; background: #fff; border: 1px solid #ababab; display: grid; place-items: center; flex: none; }
.vscroll .thumb { height: 496px; background: #fff; border: 1px solid #ababab; }
.vscroll .track { flex: 1; background: #dadada; }
.tabbar { display: flex; align-items: center; height: 25px; }
.nav1 { margin-left: 27px; border-right-color: #bdbdbd; } .nav2 { margin-left: 25px; border-left-color: #bdbdbd; }
.sheet { width: 70px; height: 26px; margin: -2px 0 0 40px; background: #fff; border: solid #999; border-width: 0 1px; border-bottom: 2px solid #217346; text-align: center; color: #217346; font: 700 13.500px/26px "Noto Sans", sans-serif; }
.plus { width: 17px; height: 17px; margin: 2px 0 0 33px; }
.tabbar .dots { width: 6px; margin-left: 759px; }
.hscroll { display: flex; height: 15px; width: 616px; margin: 2px 0 0 13px; }
.hscroll .thumb { width: 426px; background: #fff; border: 1px solid #ababab; }
.hscroll .track { flex: 1; background: #dadada; }

/* format pane */
.pane { width: 285px; height: 821px; margin-top: 3px; border-left: 1px solid #bdbdbd; padding-left: 13px; color: #a9a9a9; }
.phead { display: flex; color: #217346; font-size: 19px; line-height: 28px; height: 39px; padding-top: 11px; }
.phead .dn { border-width: 5px 5px 0; margin: 8px 8px 0 105px; }
.phead svg { width: 10px; height: 10px; margin-top: 5px; color: #686868; }
.picons { display: flex; padding: 0 0 0 6px; height: 34px; }
.picons svg { width: 23px; height: 23px; } .picons svg + svg { width: 20px; height: 24px; margin-left: 18px; } .picons svg + svg + svg { width: 22px; height: 22px; margin: 2px 0 0 18px; }
.rule { width: 257px; height: 10px; }
h4 { display: flex; align-items: center; margin: 0; font-size: 11.500px; font-weight: 700; color: #444; height: 26px; padding-left: 9px; }
h4 svg { width: 6px; height: 10px; margin-right: 7px; }
h4.open { color: #217346; padding-left: 8px; height: 25px; margin-bottom: -2px; } h4.open svg { width: 7px; height: 7px; }
.field { display: flex; justify-content: space-between; align-items: center; width: 237px; height: 27px; padding-left: 22px; }
.num { display: flex; flex-direction: column; justify-content: space-between; width: 66px; height: 21px; background: #f0f0ef; border: 1px solid #dcdcdc; padding: 4px 0 3px 53px; }
.num .up { border-bottom: 3px solid #b1b1b1; } .num .dn { border-top: 3px solid #b1b1b1; }
.check { display: flex; align-items: center; gap: 6px; height: 24px; padding-left: 22px; }
.check b { width: 12px; height: 12px; background: #fdfdfd; border: 1px solid #dcdcdc; }
.sections { padding-top: 8px; }
u { text-decoration: underline; text-underline-offset: 2px; }

.status { display: flex; align-items: center; height: 22px; border-top: 1px solid #c0c0c0; background: #f1f1f1; padding-left: 7px; }
.view { width: 38px; height: 21px; display: grid; place-items: center; }
.view.on { background: #c6c6c6; margin-left: auto; }
.view svg { width: 14px; height: 13px; }
.zoombar { width: 120px; height: 12px; margin: 0 14px 0 8px; }
.status .pc { margin-right: 9px; }

/* taskbar */
.taskbar { display: flex; height: 40px; background: linear-gradient(90deg, #002b3b 0, #00283a 45%, #041a33 75%, #03112e 100%); color: #fff; }
.tb { width: 48px; height: 40px; display: grid; place-items: center; flex: none; }
.wideb { width: 52px; padding-right: 4px; }
.app-i { width: 40px; margin: 0 0 0 9px; border-bottom: 2px solid transparent; padding-top: 1px; }
.wideb + .app-i { margin-left: 3px; }
.run { border-bottom-color: #ff82b8; }
.many { border-image: linear-gradient(90deg, #ff82b8 80%, #b85f90 80%) 2; border-style: solid; border-width: 0 0 2px; }
.hot { width: 48px; margin: 0 -4px 0 5px; background: linear-gradient(90deg, #9f652f 92%, #7f5128 92%); border-bottom-color: #f97b06; }
.front { width: 48px; margin: 0 -4px 0 5px; background: linear-gradient(90deg, #365967 92%, #25424f 92%); border-bottom-color: #ff82b8; }
.tray { display: flex; align-items: center; margin-left: auto; height: 40px; }
.caret { width: 12px; height: 8px; margin-left: 21px; } .wifi { width: 14px; height: 14px; margin-left: 12px; } .mute { width: 17px; height: 16px; margin-left: 7px; }
.lang { margin-left: 12px; }
.clock { width: 52px; display: flex; flex-direction: column; align-items: center; gap: 2px; margin-left: 15px; line-height: 17px; }
.notes { position: relative; margin: 0 20px 0 18px; width: 17px; height: 17px; }
.notes svg { width: 17px; height: 17px; margin-top: 0; }
.notes b { position: absolute; left: 8px; top: 7px; width: 16px; height: 16px; border-radius: 50%; background: #2b2d33; border: 1px solid #8b8f97; font: 600 11px/14px "Noto Sans", sans-serif; text-align: center; }
.tray > s { height: 40px; background: #6c7788; margin-right: 4px; }

/* floating toolbar and context menu over the sheet */
.mini, .menu { position: absolute; left: 346px; background: #fff; border: 1px solid #c6c6c6; box-shadow: 1px 2px 4px rgba(0, 0, 0, .18); z-index: 5; }
.mini { top: 366px; width: 260px; height: 56px; padding: 2px 3px; }
.mrow { display: grid; place-items: center; height: 25px; }
.mrow.m2 { height: 24px; }
.m1 { grid-template-columns: 61px 46px 26px 20px 22px 12px 22px 18px 25px; }
.m2 { grid-template-columns: 20px 22px 24px 21px 11px 24px 10px 24px 10px 23px 22px 24px; }
.mini .combo { overflow: hidden; }
.menu { top: 437px; width: 189px; height: 425px; padding: 1px 1px 0; color: #555; }
.mi { display: grid; grid-template-columns: 31px 1fr 14px; align-items: center; height: 24px; }
.mi > svg { width: 16px; height: 16px; margin-left: 4px; }
.mi .t { justify-self: start; }
.hover { background: #c6c6c6; color: #222; }
.head { height: 21px; } .head .band { grid-column: 2 / 4; background: #eaeaea; height: 21px; margin-left: -7px; padding: 2px 0 0 9px; font-weight: 700; }
.mi.opt { height: 30px; } .mi.opt > svg { width: 21px; height: 23px; margin: 0; }
.menu hr { margin: 0 0 0 32px; border: 0; height: 2px; background: linear-gradient(#e1e1e1 50%, transparent 50%); }
.mi.off { color: #b1b1b1; }
```
FILE: fit.js
```js
document.querySelectorAll('.t[data-w]').forEach(function (el) {
  var want = +el.dataset.w;
  var have = el.offsetWidth;
  if (!have) return;
  var keep = parseFloat(getComputedStyle(el).marginRight) || 0;
  el.style.transform = 'scaleX(' + want / have + ')';
  el.style.marginRight = keep + want - have + 'px';
});
```
